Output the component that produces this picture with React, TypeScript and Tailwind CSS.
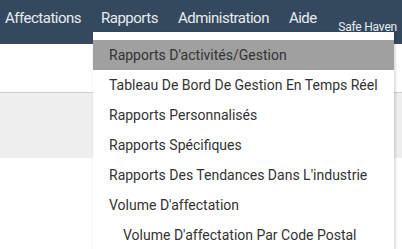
import React from "react";

const navItems = ["Affectations", "Rapports", "Administration", "Aide"];

const menuItems = [
  { label: "Rapports D'activités/Gestion", active: true },
  { label: "Tableau De Bord De Gestion En Temps Réel" },
  { label: "Rapports Personnalisés" },
  { label: "Rapports Spécifiques" },
  { label: "Rapports Des Tendances Dans L'industrie" },
  { label: "Volume D'affectation" },
  { label: "Volume D'affectation Par Code Postal", sub: true },
];

export default function App() {
  return (
    <div className="relative h-[249px] w-[402px] overflow-hidden bg-white font-['Roboto',sans-serif]">
      <nav className="flex h-[44px] items-start bg-[#34495e] pl-[5px] text-[#e8ebee]">
        <div className="flex gap-[20px] pt-[7px] text-[15px] tracking-[-0.5px]">
          {navItems.map((item) => (
            <span key={item}>{item}</span>
          ))}
        </div>
        <span className="ml-auto pr-[5px] pt-[18px] text-[12px] tracking-[-0.2px]">Safe Haven</span>
      </nav>
      <div className="h-[49px] border-b border-[#cfcfcf]" />
      <div className="h-[65px] bg-[#eeeeee]" />

      <div className="absolute left-[93px] top-[32px] w-[301px] bg-white pt-[8px] shadow-[1px_1px_3px_rgba(0,0,0,0.2)]">
        {menuItems.map((m) => (
          <div
            key={m.label}
            className={`flex h-[30px] items-center text-[14px] text-[#333] ${
              m.sub ? "pl-[30px]" : "pl-[16px]"
            } ${m.active ? "bg-[#a0a0a0]" : ""}`}
          >
            {m.label}
          </div>
        ))}
      </div>
    </div>
  );
}
